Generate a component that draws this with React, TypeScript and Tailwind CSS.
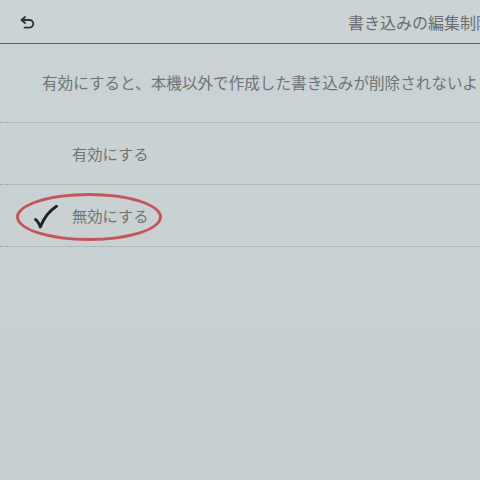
import React from 'react';

const jp = { fontFamily: '"Noto Sans CJK JP", "Noto Sans", sans-serif' };

function BackIcon() {
  return (
    <svg width="16" height="14" viewBox="0 0 16 14" fill="none">
      <path d="M5 1 1.5 4 5 7" stroke="#2f3334" strokeWidth="1.8" strokeLinecap="round" strokeLinejoin="round" />
      <path d="M2 4h7.5a3.8 3.8 0 0 1 0 7.6H4.5" stroke="#2f3334" strokeWidth="1.8" strokeLinecap="round" />
    </svg>
  );
}

function Check() {
  return (
    <svg width="24" height="24" viewBox="0 0 24 24" fill="none">
      <path d="M1.5 14.5c2 1.2 3.4 3.8 4.8 7.5C9.8 13 15 6 22.5 1.2" stroke="#1e2122" strokeWidth="2.8" strokeLinecap="round" strokeLinejoin="round" />
    </svg>
  );
}

export default function App() {
  return (
    <div className="w-[480px] h-[480px] overflow-hidden bg-gradient-to-b from-[#cbd3d5] to-[#c5ced0] text-[#707475]" style={jp}>
      {/* header */}
      <div className="h-[44px] flex items-center pl-[20px] border-b border-[#5e6566] whitespace-nowrap">
        <div className="w-[16px] shrink-0 mt-[2px]"><BackIcon /></div>
        <div className="ml-[312px] shrink-0 text-[16px] text-[#6a6e6f]">書き込みの編集制限</div>
      </div>

      <div className="h-[79px] flex items-center pl-[42px] whitespace-nowrap border-b border-dotted border-[#9aa2a4] text-[15.6px]">
        有効にすると、本機以外で作成した書き込みが削除されないよ
      </div>

      <div className="h-[62px] flex items-center pl-[72px] border-b border-dotted border-[#9aa2a4] text-[15.3px]">
        有効にする
      </div>

      <div className="relative h-[62px] flex items-center border-b border-dotted border-[#9aa2a4] text-[15.3px]">
        <div className="w-[72px] shrink-0 flex justify-start pl-[34px] mt-[2px]"><Check /></div>
        <span>無効にする</span>
        <div className="absolute left-[16px] top-[8px] w-[146px] h-[48px] rounded-[50%] border-[3px] border-[#c4555b]" />
      </div>
    </div>
  );
}
